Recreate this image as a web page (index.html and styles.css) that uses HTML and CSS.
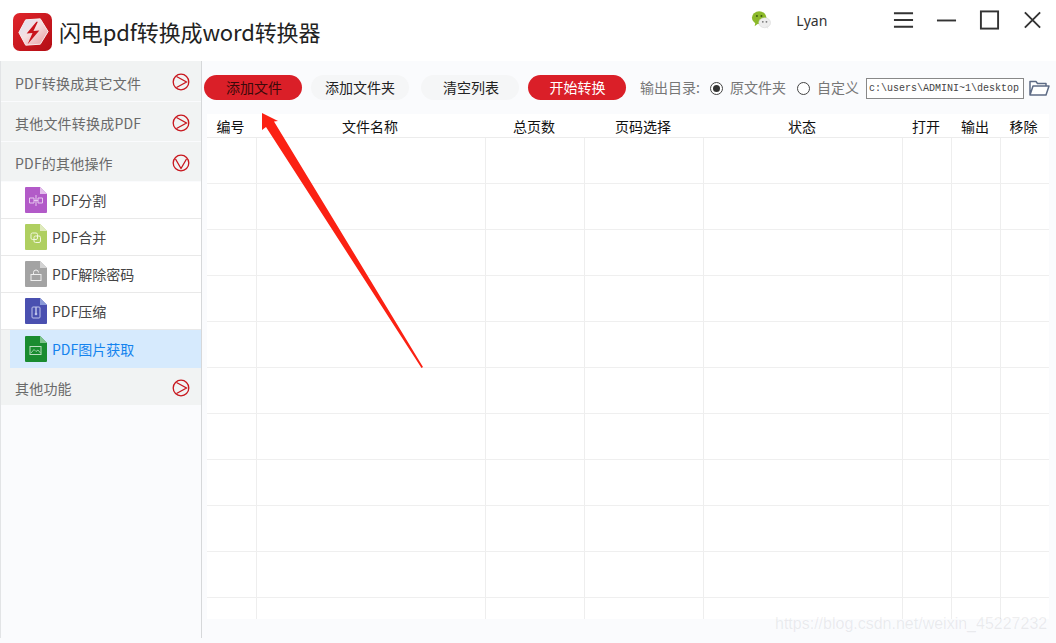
FILE: index.html
```html
<!DOCTYPE html>
<html lang="zh">
<head>
<meta charset="utf-8">
<title>闪电pdf转换成word转换器</title>
<link rel="stylesheet" href="styles.css">
</head>
<body>
<div class="app">
  <header class="titlebar">
    <svg class="logo" viewBox="0 0 40 40">
      <defs>
        <linearGradient id="lg" x1="0" y1="0" x2="1" y2="1"><stop offset="0" stop-color="#e0252b"/><stop offset="1" stop-color="#b30d14"/></linearGradient>
        <linearGradient id="hx" x1="0" y1="0" x2="1" y2="1"><stop offset="0" stop-color="#d8e2f6"/><stop offset=".45" stop-color="#f6dfe0"/><stop offset="1" stop-color="#e89a9e"/></linearGradient>
      </defs>
      <rect width="40" height="39" rx="7" fill="url(#lg)"/>
      <path d="M13 7 L28 6 L36 19 L28 32 L13 33 L6 20Z" fill="url(#hx)" stroke="#f7f0f0" stroke-width="1" stroke-linejoin="round"/>
      <path d="M24 9 L14 21 L20 20.500 L15 32 L27 18 L21 18.500 L25.500 9Z" fill="#c9141c"/>
    </svg>
    <h1 class="title">闪电pdf转换成word转换器</h1>
    <svg class="wechat" viewBox="0 0 22 22">
      <ellipse cx="9" cy="8.500" rx="8" ry="7" fill="#8cb92a"/>
      <path d="M5 13 L4 18 L9 14Z" fill="#8cb92a"/>
      <circle cx="6.500" cy="6.500" r="1.100" fill="#3e5a10"/><circle cx="11.500" cy="6.500" r="1.100" fill="#3e5a10"/>
      <ellipse cx="15" cy="14" rx="6.500" ry="5.500" fill="#eeeeee" stroke="#d0d0d0" stroke-width=".5"/>
      <path d="M16 18 L19 21 L18.500 17Z" fill="#e6e6e6"/>
      <circle cx="13" cy="13" r="1" fill="#777"/><circle cx="17" cy="13" r="1" fill="#777"/>
    </svg>
    <span class="user">Lyan</span>
    <div class="winbtns">
      <svg class="winicon" viewBox="0 0 22 18"><path d="M1 2H21M1 9H21M1 16H21" stroke="#333" stroke-width="2" fill="none"/></svg>
      <svg class="winicon" viewBox="0 0 22 18"><path d="M1 9.500H21" stroke="#333" stroke-width="2" fill="none"/></svg>
      <svg class="winicon" viewBox="0 0 22 18"><rect x="2" y="0" width="18" height="18" stroke="#333" stroke-width="2" fill="none"/></svg>
      <svg class="winicon" viewBox="0 0 22 18"><path d="M3 1L19 17M19 1L3 17" stroke="#333" stroke-width="2" fill="none"/></svg>
    </div>
  </header>
  <div class="body">
    <aside class="sidebar">
      <div class="group first">PDF转换成其它文件<svg class="chev" viewBox="0 0 18 18"><circle cx="9" cy="9" r="7.800" fill="none" stroke="#c8161d" stroke-width="1.300"/><path d="M4.500 3.500L14.500 9L4.500 14.500" fill="none" stroke="#c8161d" stroke-width="1.300"/></svg></div>
      <div class="group">其他文件转换成PDF<svg class="chev" viewBox="0 0 18 18"><circle cx="9" cy="9" r="7.800" fill="none" stroke="#c8161d" stroke-width="1.300"/><path d="M4.500 3.500L14.500 9L4.500 14.500" fill="none" stroke="#c8161d" stroke-width="1.300"/></svg></div>
      <div class="group">PDF的其他操作<svg class="chev" viewBox="0 0 18 18"><circle cx="9" cy="9" r="7.800" fill="none" stroke="#c8161d" stroke-width="1.300"/><path d="M3.500 5L9 14.500L14.500 5" fill="none" stroke="#c8161d" stroke-width="1.300"/></svg></div>
      <div class="sub">
        <svg class="fileicon" viewBox="0 0 22 26"><path d="M1 0H15L22 7V25a1 1 0 0 1-1 1H1a1 1 0 0 1-1-1V1a1 1 0 0 1 1-1Z" fill="#b25ac8"/><path d="M15 0L22 7H15Z" fill="#e3bfec"/><path d="M4.500 11H9V16H4.500ZM13 11H17.500V16H13ZM11 8V19M9 13.500H13" fill="none" stroke="#e6c8ee" stroke-width="1"/></svg>PDF分割</div>
      <div class="sub">
        <svg class="fileicon" viewBox="0 0 22 26"><path d="M1 0H15L22 7V25a1 1 0 0 1-1 1H1a1 1 0 0 1-1-1V1a1 1 0 0 1 1-1Z" fill="#afcf60"/><path d="M15 0L22 7H15Z" fill="#dfeabd"/><rect x="6" y="9" width="6.500" height="6.500" rx="1.500" fill="none" stroke="#f0f6dc"/><rect x="9" y="12" width="6.500" height="6.500" rx="1.500" fill="none" stroke="#f0f6dc"/></svg>PDF合并</div>
      <div class="sub">
        <svg class="fileicon" viewBox="0 0 22 26"><path d="M1 0H15L22 7V25a1 1 0 0 1-1 1H1a1 1 0 0 1-1-1V1a1 1 0 0 1 1-1Z" fill="#a3a3a3"/><path d="M15 0L22 7H15Z" fill="#d3d3d3"/><rect x="6" y="13.500" width="10" height="6" fill="none" stroke="#efefef"/><path d="M8.500 13.500V11.500a2.500 2.500 0 0 1 5 0" fill="none" stroke="#efefef"/></svg>PDF解除密码</div>
      <div class="sub">
        <svg class="fileicon" viewBox="0 0 22 26"><path d="M1 0H15L22 7V25a1 1 0 0 1-1 1H1a1 1 0 0 1-1-1V1a1 1 0 0 1 1-1Z" fill="#4a50b0"/><path d="M15 0L22 7H15Z" fill="#8a9ad8"/><rect x="7" y="9" width="8" height="11" rx="1" fill="none" stroke="#bfc3ea"/><path d="M11 9V15" stroke="#bfc3ea" stroke-width="1.500"/><circle cx="11" cy="16" r="1.300" fill="#bfc3ea"/></svg>PDF压缩</div>
      <div class="sub active">
        <svg class="fileicon" viewBox="0 0 22 26"><path d="M1 0H15L22 7V25a1 1 0 0 1-1 1H1a1 1 0 0 1-1-1V1a1 1 0 0 1 1-1Z" fill="#1a8c30"/><path d="M15 0L22 7H15Z" fill="#7fc48c"/><rect x="5" y="10.500" width="11" height="8" fill="none" stroke="#b9dfc0"/><path d="M6 17L9 13.500L11 15.500L13 14L15.500 17" fill="none" stroke="#b9dfc0" stroke-width=".8"/></svg>PDF图片获取</div>
      <div class="group last">其他功能<svg class="chev" viewBox="0 0 18 18"><circle cx="9" cy="9" r="7.800" fill="none" stroke="#c8161d" stroke-width="1.300"/><path d="M4.500 3.500L14.500 9L4.500 14.500" fill="none" stroke="#c8161d" stroke-width="1.300"/></svg></div>
    </aside>
    <main class="main">
      <div class="toolbar">
        <button class="btn red dark">添加文件</button>
        <button class="btn plain">添加文件夹</button>
        <button class="btn">清空列表</button>
        <button class="btn red plain">开始转换</button>
        <span class="lbl">输出目录:</span>
        <span class="radio on"></span><span class="opt">原文件夹</span>
        <span class="radio"></span><span class="opt">自定义</span>
        <span class="path">c:\users\ADMINI~1\desktop</span>
        <svg class="folder" viewBox="0 0 21 16"><path d="M1 15V1.500H7L8.500 3.500H17V6M1 15L4 6H20L17 15Z" fill="#fff" stroke="#5d6b85" stroke-width="1.500" stroke-linejoin="round"/></svg>
      </div>
      <div class="table">
        <div class="row head"><span>编号</span><span>文件名称</span><span>总页数</span><span>页码选择</span><span>状态</span><span>打开</span><span>输出</span><span>移除</span></div>
        <div class="row"><i></i><i></i><i></i><i></i><i></i><i></i><i></i><i></i></div>
        <div class="row"><i></i><i></i><i></i><i></i><i></i><i></i><i></i><i></i></div>
        <div class="row"><i></i><i></i><i></i><i></i><i></i><i></i><i></i><i></i></div>
        <div class="row"><i></i><i></i><i></i><i></i><i></i><i></i><i></i><i></i></div>
        <div class="row"><i></i><i></i><i></i><i></i><i></i><i></i><i></i><i></i></div>
        <div class="row"><i></i><i></i><i></i><i></i><i></i><i></i><i></i><i></i></div>
        <div class="row"><i></i><i></i><i></i><i></i><i></i><i></i><i></i><i></i></div>
        <div class="row"><i></i><i></i><i></i><i></i><i></i><i></i><i></i><i></i></div>
        <div class="row"><i></i><i></i><i></i><i></i><i></i><i></i><i></i><i></i></div>
        <div class="row"><i></i><i></i><i></i><i></i><i></i><i></i><i></i><i></i></div>
        <div class="row tail"><i></i><i></i><i></i><i></i><i></i><i></i><i></i><i></i></div>
      </div>
    </main>
  </div>
  <svg class="arrow" viewBox="0 0 170 260"><path d="M1 0L17 8L13 8.500L162 254L160.500 255L5 14L1 17Z" fill="#fb2113"/></svg>
  <span class="watermark">https://blog.csdn.net/weixin_45227232</span>
</div>
</body>
</html>
```
FILE: styles.css
```css
* { box-sizing: border-box; }
html, body { margin: 0; padding: 0; }
body {
  width: 1056px;
  height: 643px;
  overflow: hidden;
  background: #fff;
  font-family: "Noto Sans CJK SC", "Liberation Sans", sans-serif;
}
.app { position: relative; width: 1056px; height: 643px; display: flex; flex-direction: column; }
.titlebar { height: 61px; display: flex; align-items: flex-start; padding: 13px 0 0 13px; flex: none; }
.logo { width: 39px; height: 39px; flex: none; }
.title {
  margin: 3px 0 0 7px;
  font-size: 22px;
  line-height: 30px;
  font-weight: 400;
  letter-spacing: -.13px;
  color: #222;
  white-space: nowrap;
}
.wechat { width: 20px; height: 20px; margin: -3px 0 0 431px; flex: none; }
.user { font-size: 14px; line-height: 16px; margin: 0 0 0 25px; color: #333; font-family: "Noto Sans", sans-serif; }
.winbtns { display: flex; gap: 22px; margin-left: 66px; margin-top: -2px; }
.winicon { width: 21px; height: 18px; flex: none; overflow: visible; }
.body { flex: 1; display: flex; min-height: 0; background: #fafbfd; }
.sidebar {
  width: 202px;
  flex: none;
  border-right: 1px solid #d6d8da;
  border-left: 1px solid #e2e4e6;
  height: 577px;
  font-size: 14px;
  color: #6a6a6a;
}
.group {
  height: 40px;
  background: #f1f3f3;
  border-bottom: 1px solid #fafbfd;
  display: flex;
  align-items: center;
  justify-content: space-between;
  padding: 3px 11px 0 14px;
  letter-spacing: .2px;
  white-space: nowrap;
}
.group.first { height: 41px; }
.group.last { height: 37px; border-bottom: 0; }
.chev { width: 18px; height: 18px; flex: none; margin-top: -1px; }
.sub {
  height: 37px;
  background: #fff;
  border-bottom: 1px solid #e9e9e9;
  display: flex;
  align-items: center;
  gap: 5px;
  padding-left: 24px;
  color: #444;
  white-space: nowrap;
}
.sub.active {
  height: 38px;
  color: #1483ee;
  background: linear-gradient(90deg, #f1f3f3 9px, #d6eafd 9px);
  border-bottom: 0;
}
.fileicon { width: 22px; height: 26px; flex: none; }
.main { flex: 1; min-width: 0; padding-left: 2px; }
.toolbar { height: 53px; display: flex; align-items: center; font-size: 14px; white-space: nowrap; }
.btn {
  width: 98px;
  height: 25px;
  border: 0;
  border-radius: 13px;
  background: #f5f6f7;
  color: #222;
  font: inherit;
  line-height: 22px;
  padding: 0 0 2px 2px;
  margin-right: 9px;
}
.btn.plain { padding-left: 0; }
.btn.red.plain { padding-left: 1px; }
.btn.red { background: #da1f28; color: #fff; }
.btn.red.dark { color: #3a0a0a; }
.btn:nth-child(2) { margin-right: 12px; }
.lbl { color: #777; margin-left: 5px; margin-top: -1px; }
.radio {
  width: 13px;
  height: 13px;
  border-radius: 50%;
  border: 1px solid #444;
  background: #fff;
  margin-left: 10px;
  margin-top: 1px;
  position: relative;
  flex: none;
}
.radio.on::after {
  content: "";
  position: absolute;
  left: 2px;
  top: 2px;
  width: 7px;
  height: 7px;
  border-radius: 50%;
  background: #333;
}
.opt { color: #777; margin-left: 7px; margin-top: -1px; }
.radio + .opt + .radio { margin-left: 11px; }
.path {
  width: 158px;
  height: 21px;
  margin-left: 7px;
  margin-top: 1px;
  border: 1px solid #888;
  background: #fff;
  font-family: "Liberation Mono", monospace;
  font-size: 10px;
  line-height: 19px;
  padding-left: 2px;
  color: #444;
  overflow: hidden;
}
.folder { width: 21px; height: 16px; margin-left: 5px; flex: none; }
.table { width: 842px; margin-left: 3px; background: #fff; }
.row {
  display: grid;
  grid-template-columns: 50px 229px 99px 119px 199px 49px 49px 48px;
  height: 46px;
  border-bottom: 1px solid #efefef;
}
.row i { border-right: 1px solid #eeeeee; }
.row i:last-child { border-right: 0; }
.row.head { height: 24px; border-bottom: 1px solid #ececec; font-size: 14px; color: #111; text-align: center; line-height: 25px; }
.row.head span { padding-right: 3px; }
.row.tail { height: 21px; border-bottom: 0; }
.arrow { position: absolute; left: 261px; top: 113px; width: 170px; height: 260px; }
.watermark {
  position: absolute;
  left: 775px;
  top: 615px;
  font-family: "Liberation Sans", sans-serif;
  font-size: 16px;
  color: rgba(120, 120, 130, .13);
  white-space: nowrap;
}
```
